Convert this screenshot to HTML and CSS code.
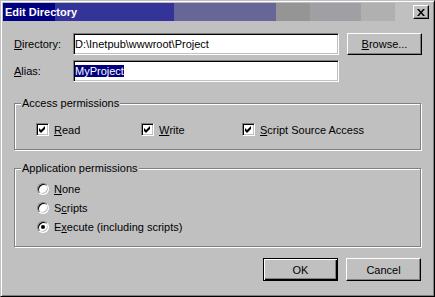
FILE: index.html
```html
<!DOCTYPE html>
<html lang="en">
  <head>
    <meta charset="UTF-8">
    <title>Edit Directory</title>
    <link rel="stylesheet" href="styles.css">
  </head>
  <body>
    <div class="window">
      <div class="titlebar">
        <span class="title">Edit Directory</span>
        <button class="close" type="button">
          <svg width="8" height="7" viewBox="0 0 8 7"><path d="M0 0H2L4 2.5L6 0H8L5 3.5L8 7H6L4 4.5L2 7H0L3 3.5Z" fill="#000"/></svg>
        </button>
      </div>

      <div class="body">
        <div class="row">
          <label class="lbl"><u>D</u>irectory:</label>
          <div class="field">D:\Inetpub\wwwroot\Project</div>
          <button class="btn browse" type="button"><u>B</u>rowse...</button>
        </div>
        <div class="row">
          <label class="lbl"><u>A</u>lias:</label>
          <div class="field"><span class="sel">MyProject</span></div>
        </div>

        <fieldset class="group access">
          <legend>Access permissions</legend>
          <div class="checks">
            <label class="check read"><span class="box"><svg width="7" height="7" viewBox="0 0 7 7"><path d="M0 2L2 4L6 0V3L2 7L0 5Z" fill="#000"/></svg></span><u>R</u>ead</label>
            <label class="check write"><span class="box"><svg width="7" height="7" viewBox="0 0 7 7"><path d="M0 2L2 4L6 0V3L2 7L0 5Z" fill="#000"/></svg></span><u>W</u>rite</label>
            <label class="check"><span class="box"><svg width="7" height="7" viewBox="0 0 7 7"><path d="M0 2L2 4L6 0V3L2 7L0 5Z" fill="#000"/></svg></span><u>S</u>cript Source Access</label>
          </div>
        </fieldset>

        <fieldset class="group app">
          <legend>Application permissions</legend>
          <div class="radios">
            <label class="radio"><span class="dot"></span><u>N</u>one</label>
            <label class="radio"><span class="dot"></span>S<u>c</u>ripts</label>
            <label class="radio"><span class="dot on"></span>E<u>x</u>ecute (including scripts)</label>
          </div>
        </fieldset>

        <div class="actions">
          <button class="btn default" type="button">OK</button>
          <button class="btn" type="button">Cancel</button>
        </div>
      </div>
    </div>
  </body>
</html>
```

FILE: styles.css
```css
body {
  margin: 0;
  background: #c0c0c0;
  font: 11px "Liberation Sans", Arial, sans-serif;
  color: #000;
}

.window {
  width: 435px;
  height: 297px;
  box-sizing: border-box;
  padding: 2px;
  border: 1px solid;
  border-color: #c0c0c0 #000 #000 #c0c0c0;
  box-shadow: inset 1px 1px 0 #fff, inset -1px -1px 0 #808080;
}

/* title bar with the banded gradient */
.titlebar {
  display: flex;
  align-items: center;
  height: 18px;
  background: linear-gradient(to right,
    #000080 0 52px, #333399 52px 171px, #666699 171px 273px,
    #959595 273px 307px, #a0a0a4 307px 358px, #b0b0b0 358px 392px,
    transparent 392px);
}
.title {
  flex: 1;
  padding-left: 2px;
  color: #fff;
  font-weight: bold;
}
.close {
  display: flex;
  align-items: center;
  justify-content: center;
  width: 16px;
  height: 14px;
  margin-right: 3px;
  padding: 0;
  background: #c0c0c0;
  border: 1px solid;
  border-color: #fff #000 #000 #fff;
  box-shadow: inset -1px -1px 0 #808080;
}

.body {
  padding: 12px 10px 0 11px;
}

.row {
  display: flex;
  align-items: center;
  height: 22px;
}
.row + .row {
  margin-top: 5px;
}
.lbl {
  width: 59px;
}
.field {
  display: flex;
  align-items: center;
  width: 266px;
  height: 22px;
  box-sizing: border-box;
  padding-left: 1px;
  background: #fff;
  border: 1px solid;
  border-color: #808080 #fff #fff #808080;
  box-shadow: inset 1px 1px 0 #000, inset -1px -1px 0 #c0c0c0;
  white-space: nowrap;
}
.sel {
  background: #000080;
  color: #fff;
}

/* raised buttons */
.btn {
  width: 75px;
  height: 23px;
  padding: 0;
  background: #c0c0c0;
  font: inherit;
  color: #000;
  border: 1px solid;
  border-color: #fff #000 #000 #fff;
  box-shadow: inset -1px -1px 0 #808080;
}
.browse {
  height: 22px;
  margin-left: 8px;
}
.btn.default {
  border-color: #000;
  box-shadow: inset 1px 1px 0 #fff, inset -1px -1px 0 #000, inset -2px -2px 0 #808080;
}

/* etched group boxes */
.group {
  width: 407px;
  box-sizing: border-box;
  margin: 0;
  padding: 0;
  border: 1px solid #808080;
  box-shadow: inset 1px 1px 0 #fff, 1px 1px 0 #fff;
}
.group legend {
  margin-left: 6px;
  padding: 0 1px;
  line-height: 13px;
  background: #c0c0c0;
}
.access {
  margin-top: 15px;
}
.app {
  margin-top: 12px;
}

.checks {
  display: flex;
  padding: 13px 0 13px 21px;
}
.check {
  display: flex;
  align-items: center;
  height: 13px;
}
.check.read {
  width: 105px;
}
.check.write {
  width: 101px;
}
.box {
  display: flex;
  align-items: center;
  justify-content: center;
  width: 13px;
  height: 13px;
  box-sizing: border-box;
  margin-right: 5px;
  background: #fff;
  border: 1px solid;
  border-color: #808080 #fff #fff #808080;
  box-shadow: inset 1px 1px 0 #000, inset -1px -1px 0 #c0c0c0;
}

.radios {
  display: flex;
  flex-direction: column;
  gap: 6px;
  padding: 7px 0 13px 22px;
}
.radio {
  display: flex;
  align-items: center;
  height: 13px;
}
.dot {
  display: flex;
  align-items: center;
  justify-content: center;
  width: 12px;
  height: 12px;
  box-sizing: border-box;
  margin-right: 5px;
  border-radius: 50%;
  background: #fff;
  border: 1px solid;
  border-color: #808080 #fff #fff #808080;
  box-shadow: inset 1px 1px 0 #000, inset -1px -1px 0 #c0c0c0;
}
.dot.on::after {
  content: "";
  width: 4px;
  height: 4px;
  border-radius: 50%;
  background: #000;
}

.actions {
  display: flex;
  justify-content: flex-end;
  gap: 8px;
  margin-top: 11px;
  margin-right: 1px;
}
```
